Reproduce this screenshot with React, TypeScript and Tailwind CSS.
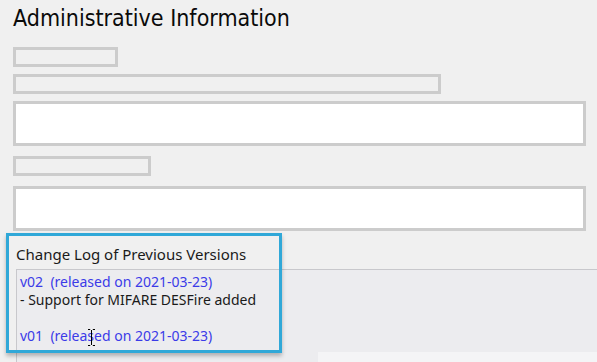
import React from 'react';

const boxBorder = 'border-[3px] border-[#cccccc]';

const IBeam: React.FC = () => (
  <svg width="9" height="17" viewBox="0 0 9 17" className="absolute left-[87px] top-[329px]">
    <path d="M1 0.5h2.5M5.5 0.5H8M1 16.5h2.5M5.5 16.5H8M4.5 1v15" stroke="#000" strokeWidth="1" fill="none" />
    <path d="M3.5 0.5h2M3.5 16.5h2" stroke="#fff" strokeWidth="1" />
  </svg>
);

const App: React.FC = () => {
  return (
    <div className="relative w-[597px] h-[362px] overflow-hidden bg-[#f0f0f0] font-['Noto_Sans',sans-serif]">
      {/* Header */}
      <div className="pl-[13px] pt-[4px]">
        <h1 className="font-['DejaVu_Sans_Condensed','DejaVu_Sans',sans-serif] text-[23px] leading-[28px] text-[#0a0a0a]">
          Administrative Information
        </h1>

        {/* Form fields */}
        <div className="mt-[15px] flex flex-col">
          <div className={`${boxBorder} w-[105px] h-[20px]`} />
          <div className={`${boxBorder} mt-[7px] w-[428px] h-[20px]`} />
          <div className={`${boxBorder} mt-[7px] w-[573px] h-[45px] bg-white`} />
          <div className={`${boxBorder} mt-[10px] w-[138px] h-[20px]`} />
          <div className={`${boxBorder} mt-[10px] w-[573px] h-[45px] bg-white`} />
        </div>
      </div>

      {/* Change log */}
      <div className="mt-[10px] pl-[16px]">
        <div className="text-[15px] leading-[20px] text-[#1a1a1a] h-[28px] pt-[3px]">
          Change Log of Previous Versions
        </div>
        <div className="border-l border-t border-[#c8c8cc] bg-[#ececef] h-[100px] pl-[3px] pt-[3px] text-[14px] leading-[18px]">
          <div className="text-[#3b3be8]">v02&nbsp;&nbsp;(released on 2021-03-23)</div>
          <div className="text-[#1a1a1a]">- Support for MIFARE DESFire added</div>
          <div className="h-[18px]" />
          <div className="text-[#3b3be8]">v01&nbsp;&nbsp;(released on 2021-03-23)</div>
        </div>
      </div>

      {/* Highlight annotation */}
      <div className="absolute left-[6px] top-[233px] w-[276px] h-[120px] border-[3px] border-[#30a8d8] shadow-[0_3px_4px_rgba(0,0,0,0.25)]" />
      <div className="absolute left-[318px] top-[352px] w-[279px] h-[10px] bg-[#f4f4f6]" />
      <IBeam />
    </div>
  );
};

export default App;
